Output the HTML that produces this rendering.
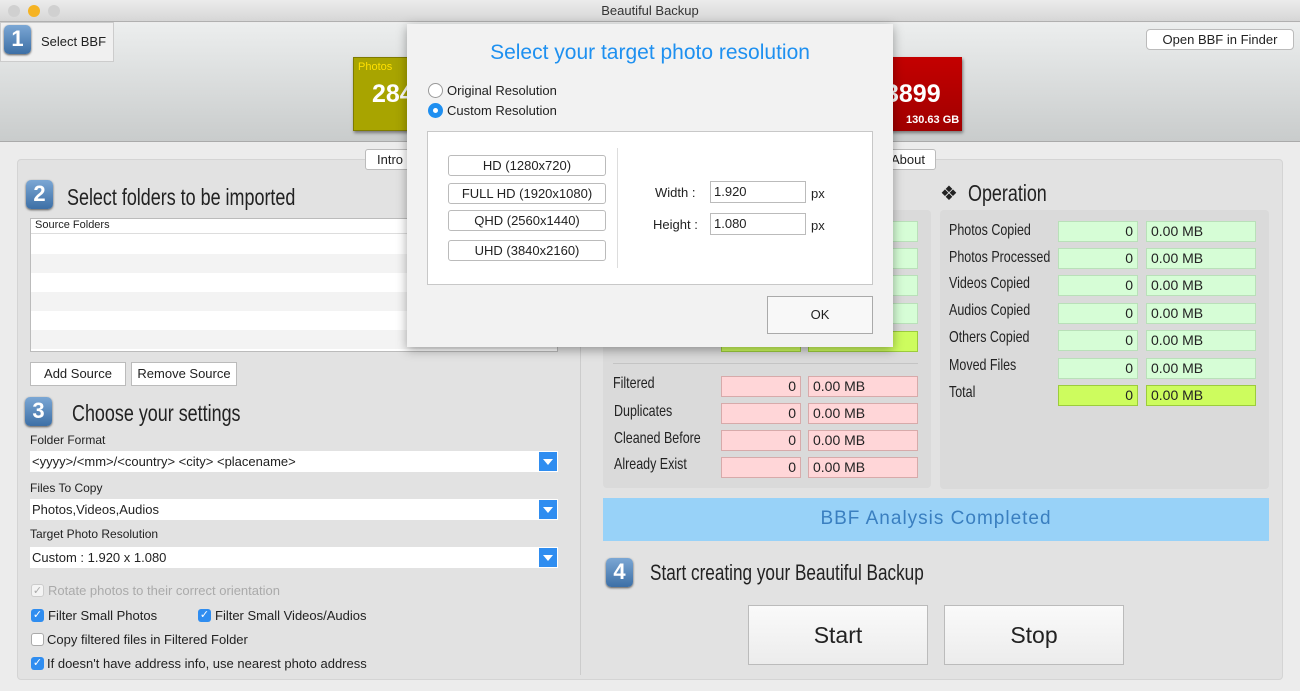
<!DOCTYPE html>
<html><head><meta charset="utf-8"><style>
*{box-sizing:border-box;margin:0;padding:0}
body{width:1300px;height:691px;overflow:hidden;background:#ececec;font-family:"Liberation Sans",sans-serif;font-size:13px;color:#222;position:relative}
.a{position:absolute}
.cond{font-family:"Liberation Sans Narrow","Liberation Sans",sans-serif}
.badge{position:absolute;width:27px;height:29px;border-radius:5px;background:linear-gradient(#7ba7d4,#3d6fa6);color:#fff;font-weight:bold;font-size:22px;text-align:center;line-height:28px;box-shadow:0 1px 2px #555}
.btn{position:absolute;background:#fff;border:1px solid #bbb;border-radius:4px;text-align:center;font-size:13px}
.fld{position:absolute;height:21px;border:1px solid #aaa;font-size:14px;line-height:19px;padding:0 4px}
.g{background:#d6fdd6;border-color:#b9e0b9}
.y{background:#cdfc5e;border-color:#9ccc3c}
.p{background:#ffd6d8;border-color:#d7aaaa}
.r{text-align:right}
.lbl{position:absolute;font-size:16px;transform:scaleX(.78);transform-origin:left;white-space:nowrap}
.sel{position:absolute;left:30px;width:528px;height:21px;background:#fff;font-size:13px;line-height:21px;padding-left:2px}
.sel i{position:absolute;right:1px;top:1px;width:18px;height:19px;background:#2f8df0}
.sel i:after{content:"";position:absolute;left:4px;top:7px;border-left:5px solid transparent;border-right:5px solid transparent;border-top:6px solid #fff}
.cb{position:absolute;width:13px;height:13px;border-radius:3px;background:#2f8df0;color:#fff;font-size:11px;line-height:13px;text-align:center}
.cbt{position:absolute;font-size:13px}
</style></head><body>
<div class="a" style="left:0;top:0;width:1300px;height:22px;background:linear-gradient(#ececec,#d6d6d6);border-bottom:1px solid #b0b0b0;text-align:center;line-height:22px;font-size:13px;color:#333">Beautiful Backup</div>
<div class="a" style="left:8px;top:5px;width:12px;height:12px;border-radius:6px;background:#d0d0d0"></div>
<div class="a" style="left:28px;top:5px;width:12px;height:12px;border-radius:6px;background:#f5b323"></div>
<div class="a" style="left:48px;top:5px;width:12px;height:12px;border-radius:6px;background:#d0d0d0"></div>
<div class="a" style="left:0;top:23px;width:1300px;height:119px;background:linear-gradient(#eceeee,#c9cccc);border-bottom:1px solid #aaa"></div>
<div class="a" style="left:0;top:22px;width:114px;height:40px;background:#f0f0f0;border:1px solid #ccc"></div>
<div class="badge" style="left:4px;top:25px">1</div>
<div class="a" style="left:41px;top:34px;font-size:13px">Select BBF</div>
<div class="a" style="left:353px;top:57px;width:60px;height:74px;background:#a8a400;border:1px solid #7e7b00;box-shadow:1px 2px 3px #777"></div>
<div class="a cond" style="left:358px;top:61px;color:#ffe000;font-size:11px">Photos</div>
<div class="a" style="left:372px;top:80px;color:#fff;font-weight:bold;font-size:25px">284</div>
<div class="a" style="left:880px;top:57px;width:82px;height:74px;background:linear-gradient(#c40000,#a00000);box-shadow:1px 2px 3px #777"></div>
<div class="a" style="left:885px;top:80px;color:#fff;font-weight:bold;font-size:25px">3899</div>
<div class="a cond" style="left:906px;top:114px;color:#fff;font-size:11px;font-weight:bold">130.63 GB</div>
<div class="btn" style="left:1146px;top:29px;width:148px;height:21px;line-height:19px">Open BBF in Finder</div>
<div class="a" style="left:17px;top:159px;width:1266px;height:521px;background:#e2e2e2;border:1px solid #d4d4d4;border-radius:4px"></div>
<div class="btn" style="left:365px;top:149px;width:50px;height:21px;line-height:19px;border-radius:3px">Intro</div>
<div class="btn" style="left:880px;top:149px;width:56px;height:21px;line-height:19px;border-radius:3px">About</div>
<div class="a" style="left:580px;top:170px;width:1px;height:505px;background:#ccc"></div>
<div class="badge" style="left:26px;top:180px">2</div>
<div class="lbl" style="left:67px;top:184px;font-size:23px">Select folders to be imported</div>
<div class="a" style="left:30px;top:218px;width:528px;height:134px;background:#fff;border:1px solid #bbb"></div>
<div class="a" style="left:31px;top:219px;width:526px;height:15px;border-bottom:1px solid #ddd;font-size:11px;padding-left:4px">Source Folders</div>
<div class="a" style="left:31px;top:254px;width:526px;height:19px;background:#f3f3f3"></div>
<div class="a" style="left:31px;top:292px;width:526px;height:19px;background:#f3f3f3"></div>
<div class="a" style="left:31px;top:330px;width:526px;height:19px;background:#f3f3f3"></div>
<div class="btn" style="left:30px;top:362px;width:96px;height:24px;line-height:22px;border-radius:0">Add Source</div>
<div class="btn" style="left:131px;top:362px;width:106px;height:24px;line-height:22px;border-radius:0">Remove Source</div>
<div class="badge" style="left:25px;top:397px">3</div>
<div class="lbl" style="left:72px;top:400px;font-size:23px">Choose your settings</div>
<div class="a" style="left:30px;top:433px;font-size:12px">Folder Format</div>
<div class="sel" style="top:451px">&lt;yyyy&gt;/&lt;mm&gt;/&lt;country&gt; &lt;city&gt; &lt;placename&gt;<i></i></div>
<div class="a" style="left:30px;top:481px;font-size:12px">Files To Copy</div>
<div class="sel" style="top:499px">Photos,Videos,Audios<i></i></div>
<div class="a" style="left:30px;top:527px;font-size:12px">Target Photo Resolution</div>
<div class="sel" style="top:547px">Custom : 1.920 x 1.080<i></i></div>
<div class="cb" style="left:31px;top:584px;background:#f4f4f4;border:1px solid #ccc;color:#aaa">✓</div><div class="cbt" style="left:48px;top:583px;color:#aaa">Rotate photos to their correct orientation</div>
<div class="cb" style="left:31px;top:609px">✓</div><div class="cbt" style="left:48px;top:608px">Filter Small Photos</div>
<div class="cb" style="left:198px;top:609px">✓</div><div class="cbt" style="left:215px;top:608px">Filter Small Videos/Audios</div>
<div class="cb" style="left:31px;top:633px;background:#fff;border:1px solid #aaa"></div><div class="cbt" style="left:47px;top:632px">Copy filtered files in Filtered Folder</div>
<div class="cb" style="left:31px;top:657px">✓</div><div class="cbt" style="left:47px;top:656px">If doesn't have address info, use nearest photo address</div>
<div class="a" style="left:603px;top:210px;width:328px;height:278px;background:#dadada;border-radius:4px"></div>
<div class="fld g" style="left:721px;top:221px;width:80px"></div><div class="fld g" style="left:808px;top:221px;width:110px"></div>
<div class="fld g" style="left:721px;top:248px;width:80px"></div><div class="fld g" style="left:808px;top:248px;width:110px"></div>
<div class="fld g" style="left:721px;top:275px;width:80px"></div><div class="fld g" style="left:808px;top:275px;width:110px"></div>
<div class="fld g" style="left:721px;top:303px;width:80px"></div><div class="fld g" style="left:808px;top:303px;width:110px"></div>
<div class="fld y r" style="left:721px;top:331px;width:80px">0</div><div class="fld y" style="left:808px;top:331px;width:110px">0.00 MB</div>
<div class="a" style="left:613px;top:363px;width:305px;height:1px;background:#c4c4c4"></div>
<div class="lbl" style="left:613px;top:375px">Filtered</div><div class="fld p r" style="left:721px;top:376px;width:80px">0</div><div class="fld p" style="left:808px;top:376px;width:110px">0.00 MB</div>
<div class="lbl" style="left:614px;top:403px">Duplicates</div><div class="fld p r" style="left:721px;top:403px;width:80px">0</div><div class="fld p" style="left:808px;top:403px;width:110px">0.00 MB</div>
<div class="lbl" style="left:614px;top:430px">Cleaned Before</div><div class="fld p r" style="left:721px;top:430px;width:80px">0</div><div class="fld p" style="left:808px;top:430px;width:110px">0.00 MB</div>
<div class="lbl" style="left:614px;top:456px">Already Exist</div><div class="fld p r" style="left:721px;top:457px;width:80px">0</div><div class="fld p" style="left:808px;top:457px;width:110px">0.00 MB</div>
<div class="a" style="left:940px;top:181px;font-size:20px">❖</div>
<div class="lbl" style="left:968px;top:180px;font-size:23px">Operation</div>
<div class="a" style="left:940px;top:210px;width:329px;height:279px;background:#dadada;border-radius:4px"></div>
<div class="lbl" style="left:949px;top:222px">Photos Copied</div><div class="fld g r" style="left:1058px;top:221px;width:80px">0</div><div class="fld g" style="left:1146px;top:221px;width:110px">0.00 MB</div>
<div class="lbl" style="left:949px;top:249px">Photos Processed</div><div class="fld g r" style="left:1058px;top:248px;width:80px">0</div><div class="fld g" style="left:1146px;top:248px;width:110px">0.00 MB</div>
<div class="lbl" style="left:949px;top:275px">Videos Copied</div><div class="fld g r" style="left:1058px;top:275px;width:80px">0</div><div class="fld g" style="left:1146px;top:275px;width:110px">0.00 MB</div>
<div class="lbl" style="left:949px;top:302px">Audios Copied</div><div class="fld g r" style="left:1058px;top:303px;width:80px">0</div><div class="fld g" style="left:1146px;top:303px;width:110px">0.00 MB</div>
<div class="lbl" style="left:949px;top:329px">Others Copied</div><div class="fld g r" style="left:1058px;top:330px;width:80px">0</div><div class="fld g" style="left:1146px;top:330px;width:110px">0.00 MB</div>
<div class="lbl" style="left:949px;top:357px">Moved Files</div><div class="fld g r" style="left:1058px;top:358px;width:80px">0</div><div class="fld g" style="left:1146px;top:358px;width:110px">0.00 MB</div>
<div class="lbl" style="left:949px;top:384px">Total</div><div class="fld y r" style="left:1058px;top:385px;width:80px">0</div><div class="fld y" style="left:1146px;top:385px;width:110px">0.00 MB</div>
<div class="a" style="left:603px;top:498px;width:666px;height:43px;background:#98d2f8;text-align:center;line-height:42px;font-size:19px;color:#3a7fc0;letter-spacing:1px">BBF Analysis Completed</div>
<div class="badge" style="left:606px;top:558px">4</div>
<div class="lbl" style="left:650px;top:560px;font-size:22px">Start creating your Beautiful Backup</div>
<div class="btn" style="left:748px;top:605px;width:180px;height:60px;line-height:58px;font-size:23px;border-radius:0;background:linear-gradient(#fafafa,#ececec)">Start</div>
<div class="btn" style="left:944px;top:605px;width:180px;height:60px;line-height:58px;font-size:23px;border-radius:0;background:linear-gradient(#fafafa,#ececec)">Stop</div>
<div class="a" style="left:407px;top:24px;width:486px;height:323px;background:#f2f2f2;box-shadow:0 3px 10px rgba(0,0,0,.35)"></div>
<div class="a" style="left:407px;top:41px;width:486px;text-align:center;font-size:21px;color:#1e90f0">Select your target photo resolution</div>
<div class="a" style="left:428px;top:83px;width:15px;height:15px;border-radius:8px;background:#fff;border:1px solid #999"></div>
<div class="a" style="left:447px;top:83px;font-size:13px">Original Resolution</div>
<div class="a" style="left:428px;top:103px;width:15px;height:15px;border-radius:8px;background:#1f8ff0"></div>
<div class="a" style="left:433px;top:108px;width:5px;height:5px;border-radius:3px;background:#fff"></div>
<div class="a" style="left:447px;top:103px;font-size:13px">Custom Resolution</div>
<div class="a" style="left:427px;top:131px;width:446px;height:154px;background:#fff;border:1px solid #c8c8c8"></div>
<div class="btn" style="left:448px;top:155px;width:158px;height:21px;line-height:19px;border-radius:3px">HD (1280x720)</div>
<div class="btn" style="left:448px;top:183px;width:158px;height:21px;line-height:19px;border-radius:3px">FULL HD (1920x1080)</div>
<div class="btn" style="left:448px;top:210px;width:158px;height:21px;line-height:19px;border-radius:3px">QHD (2560x1440)</div>
<div class="btn" style="left:448px;top:240px;width:158px;height:21px;line-height:19px;border-radius:3px">UHD (3840x2160)</div>
<div class="a" style="left:617px;top:148px;width:1px;height:120px;background:#ddd"></div>
<div class="a" style="left:655px;top:185px">Width :</div>
<div class="fld" style="left:710px;top:181px;width:96px;height:22px;border-color:#bbb;font-size:13px;padding-left:3px">1.920</div>
<div class="a" style="left:811px;top:186px">px</div>
<div class="a" style="left:653px;top:217px">Height :</div>
<div class="fld" style="left:710px;top:213px;width:96px;height:22px;border-color:#bbb;font-size:13px;padding-left:3px">1.080</div>
<div class="a" style="left:811px;top:218px">px</div>
<div class="btn" style="left:767px;top:296px;width:106px;height:38px;line-height:36px;border-radius:0;border-color:#aaa;background:#f8f8f8">OK</div>
</body></html>
